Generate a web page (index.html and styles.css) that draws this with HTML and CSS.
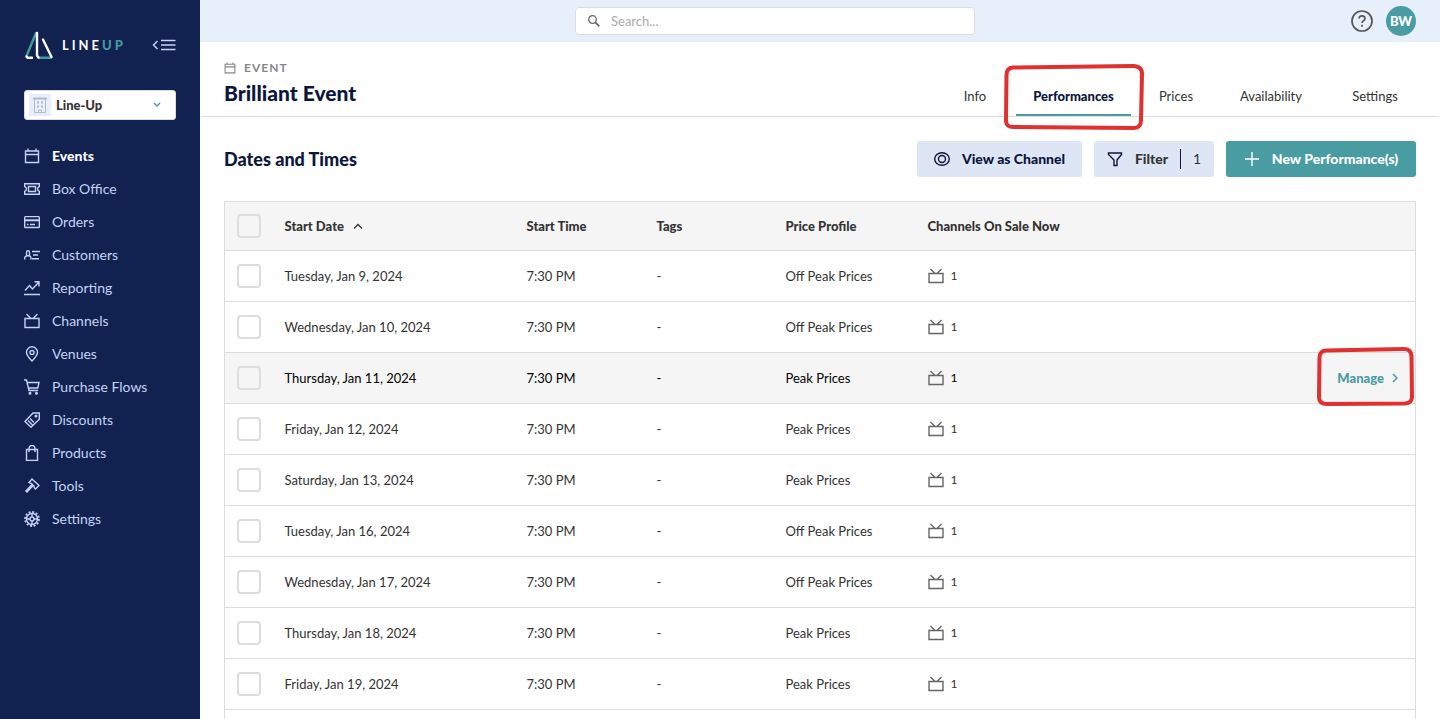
FILE: index.html
```html
<!DOCTYPE html>
<html lang="en">
<head>
  <meta charset="UTF-8">
  <meta name="viewport" content="width=device-width, initial-scale=1">
  <title>Brilliant Event</title>
  <link rel="stylesheet" href="styles.css">
</head>
<body>
  <!-- shared icons -->
  <svg class="sprite" aria-hidden="true">
    <symbol id="calendar" viewBox="0 0 16 16"><path d="M1.500 3h13v11.500h-13zM1.500 6.500h13M4 .5V3M12 .5V3"/></symbol>
    <symbol id="tv" viewBox="0 0 16 16"><path d="M1 5.500h14v9H1zM2.500 1l4.500 4.500M13.500 1L9 5.500"/></symbol>
  </svg>

  <div class="app">
    <aside class="sidebar">
      <div class="brand">
        <a class="logo" href="#" aria-label="Lineup">
          <svg width="30" height="29" viewBox="0 0 30 29" stroke-width="2.4" stroke-linecap="round" stroke-linejoin="round">
            <path d="M12 2L2.500 25M14.500 26.800h12.500" stroke="#459a9c"/>
            <path d="M2.500 25.500l1 1.300H8M13 2v22.500l1.500 2M19 8.500l8.500 17.500" stroke="#fff"/>
          </svg>
          <span class="logo-text">LINE<b>UP</b></span>
        </a>
        <button class="collapse" aria-label="Collapse menu">
          <svg width="24" height="14" viewBox="0 0 24 14"><path d="M5.500 3L1.500 7l4 4M9 2.500h14.500M9 7h14.500M9 11.500h14.500"/></svg>
        </button>
      </div>

      <div class="account">
        <span class="account-icon">
          <svg width="16" height="16" viewBox="0 0 16 16">
            <path d="M1 1.500h14" stroke-width="2"/>
            <path d="M2.500 2v13.500h11V2M6.500 15.500v-2.500h3v2.500"/>
            <path d="M5 5.500h2M9 5.500h2M5 9.500h2M9 9.500h2" stroke-width="2"/>
          </svg>
        </span>
        <select aria-label="Account"><option>Line-Up</option></select>
        <svg class="account-arrow" width="8" height="6" viewBox="0 0 8 6"><path d="M1 1l3 3 3-3"/></svg>
      </div>

      <nav class="menu">
        <a class="active" href="#"><svg><use href="#calendar"/></svg>Events</a>
        <a href="#"><svg viewBox="0 0 16 16"><path d="M.7 2.700h14.600v3a2.400 2.400 0 0 0 0 4.600v3H.7v-3a2.400 2.400 0 0 0 0-4.600zM4.500 5.500h7v5h-7z"/></svg>Box Office</a>
        <a href="#"><svg viewBox="0 0 16 16"><path d="M1.500 2.600h13a.8.8 0 0 1 .8.800v9.300a.8.8 0 0 1-.8.800h-13a.8.800 0 0 1-.8-.8V3.400a.8.8 0 0 1 .8-.8zM3 10.500h1.500M6 10.500h5"/><path d="M.7 6.300h14.600" stroke-width="2"/></svg>Orders</a>
        <a href="#"><svg viewBox="0 0 16 16"><path d="M.7 12.500V11c0-1.200.7-1.700 1.800-2V5.500c0-2.300 3-2.300 3 0V9c1 .3 1.500.8 1.500 2v1.500M2.500 8.800h3M8 4.500h8M9 8h5M8 11.800h7"/></svg>Customers</a>
        <a href="#"><svg viewBox="0 0 16 16"><path d="M0 14.500h16M1 10.500l4.500-5L8.500 9 15 2M10.500 1.800H15v4.700"/></svg>Reporting</a>
        <a href="#"><svg><use href="#tv"/></svg>Channels</a>
        <a href="#"><svg viewBox="0 0 16 16"><path d="M8 15C4.500 11.500 2.500 9 2.500 6.300a5.500 5.500 0 0 1 11 0C13.500 9 11.500 11.500 8 15z"/><circle cx="8" cy="6.500" r="2"/></svg>Venues</a>
        <a href="#"><svg viewBox="0 0 16 16"><path d="M0 1h2.500l2.500 10.500h9M3 3.500h12l-1.200 5.500H4.500"/><circle cx="6" cy="14.300" r=".8"/><circle cx="12.500" cy="14.300" r=".8"/></svg>Purchase Flows</a>
        <a href="#"><svg viewBox="0 0 16 16"><path d="M1 9.500L9 1h6.300v6.300L7 15.200zM4 8.500l4.500 4.500M6 6.500l4 4"/><circle cx="12" cy="4" r=".8"/></svg>Discounts</a>
        <a href="#"><svg viewBox="0 0 16 16"><path d="M2.500 4.500h11v11h-11zM5 7V3.500c0-4 6-4 6 0V7"/></svg>Products</a>
        <a href="#"><svg viewBox="0 0 16 16"><path d="M5 4.500L8 1l1.500 1.500 4 3.500 1.500 1.500-3.500 3.500-1.500-1.500V8L7.500 5.500z"/><path d="M8.500 7L2 14" stroke-width="2.800"/></svg>Tools</a>
        <a href="#"><svg viewBox="0 0 16 16"><circle cx="8" cy="8" r="7" stroke-width="1.800" stroke-dasharray="2 1.665"/><circle cx="8" cy="8" r="5.500"/><circle cx="8" cy="8" r="2"/><path d="M8 2.500V6M8 10v3.500M2.500 8H6M10 8h3.500"/></svg>Settings</a>
      </nav>
    </aside>

    <main class="main">
      <div class="topbar">
        <label class="search">
          <svg width="14" height="14" viewBox="0 0 14 14"><circle cx="5.500" cy="5.500" r="3.800" stroke-width="1.300"/><path d="M8.300 8.300l4 4" stroke-width="1.800"/></svg>
          <input type="text" placeholder="Search..." aria-label="Search">
        </label>
        <div class="user">
          <button class="help" aria-label="Help">
            <svg width="22" height="22" viewBox="0 0 22 22"><circle cx="11" cy="11" r="10"/><path d="M8 8.500c0-3.600 6-3.600 6 0 0 2-3 2.200-3 4.500M11 14.800v2"/></svg>
          </button>
          <button class="avatar">BW</button>
        </div>
      </div>

      <header class="event-header">
        <div>
          <div class="kicker"><svg width="12" height="12"><use href="#calendar"/></svg>EVENT</div>
          <h1>Brilliant Event</h1>
        </div>
        <nav class="tabs">
          <a href="#">Info</a>
          <a class="current" href="#">Performances
            <svg class="mark mark-tab" viewBox="0 0 142 68"><path d="M10 4.500L130 3q9 0 9 8l-1 46q0 8-7 8L12 64q-9 1-9-7L3.500 12q0-7 6.500-7.500z"/></svg>
          </a>
          <a href="#">Prices</a>
          <a href="#">Availability</a>
          <a href="#">Settings</a>
        </nav>
      </header>

      <section class="content">
        <div class="toolbar">
          <h2>Dates and Times</h2>
          <button class="btn btn-view">
            <svg width="16" height="16" viewBox="0 0 16 16"><ellipse cx="8" cy="8" rx="7.300" ry="6.300"/><circle cx="8" cy="8" r="3.500"/></svg>
            View as Channel
          </button>
          <button class="btn btn-filter">
            <svg width="16" height="16" viewBox="0 0 16 16"><path d="M1.500 2h13v1.500L10 9v5.500H7V9L1.500 3.500z"/></svg>
            Filter <span class="count">1</span>
          </button>
          <button class="btn btn-primary">
            <svg width="16" height="16" viewBox="0 0 16 16"><path d="M8 1v14M1 8h14"/></svg>
            New Performance(s)
          </button>
        </div>

        <table class="dates">
          <colgroup>
            <col class="c-check"><col class="c-date"><col class="c-time"><col class="c-tags"><col class="c-price"><col>
          </colgroup>
          <thead>
            <tr>
              <th><input type="checkbox" aria-label="Select all"></th>
              <th>Start Date <svg class="sort" width="10" height="6" viewBox="0 0 10 6"><path d="M1 5.500l4-4 4 4"/></svg></th>
              <th>Start Time</th>
              <th>Tags</th>
              <th>Price Profile</th>
              <th>Channels On Sale Now</th>
            </tr>
          </thead>
          <tbody>
            <tr>
              <td><input type="checkbox" aria-label="Select Jan 9"></td>
              <td>Tuesday, Jan 9, 2024</td><td>7:30 PM</td><td>-</td><td>Off Peak Prices</td>
              <td><div class="channels"><svg><use href="#tv"/></svg>1</div></td>
            </tr>
            <tr>
              <td><input type="checkbox" aria-label="Select Jan 10"></td>
              <td>Wednesday, Jan 10, 2024</td><td>7:30 PM</td><td>-</td><td>Off Peak Prices</td>
              <td><div class="channels"><svg><use href="#tv"/></svg>1</div></td>
            </tr>
            <tr class="hover">
              <td><input type="checkbox" aria-label="Select Jan 11"></td>
              <td>Thursday, Jan 11, 2024</td><td>7:30 PM</td><td>-</td><td>Peak Prices</td>
              <td>
                <div class="channels"><svg><use href="#tv"/></svg>1
                  <a class="manage" href="#">Manage
                    <svg class="arrow" width="6" height="10" viewBox="0 0 6 10"><path d="M1 1l4 4-4 4"/></svg>
                    <svg class="mark mark-manage" viewBox="0 0 98 60"><path d="M10 4.500L88 3q7 0 7.500 7l.5 41q0 6-7 6.500L11 58q-8 0-8-7l.5-39q0-7 6.500-7.500z"/></svg>
                  </a>
                </div>
              </td>
            </tr>
            <tr>
              <td><input type="checkbox" aria-label="Select Jan 12"></td>
              <td>Friday, Jan 12, 2024</td><td>7:30 PM</td><td>-</td><td>Peak Prices</td>
              <td><div class="channels"><svg><use href="#tv"/></svg>1</div></td>
            </tr>
            <tr>
              <td><input type="checkbox" aria-label="Select Jan 13"></td>
              <td>Saturday, Jan 13, 2024</td><td>7:30 PM</td><td>-</td><td>Peak Prices</td>
              <td><div class="channels"><svg><use href="#tv"/></svg>1</div></td>
            </tr>
            <tr>
              <td><input type="checkbox" aria-label="Select Jan 16"></td>
              <td>Tuesday, Jan 16, 2024</td><td>7:30 PM</td><td>-</td><td>Off Peak Prices</td>
              <td><div class="channels"><svg><use href="#tv"/></svg>1</div></td>
            </tr>
            <tr>
              <td><input type="checkbox" aria-label="Select Jan 17"></td>
              <td>Wednesday, Jan 17, 2024</td><td>7:30 PM</td><td>-</td><td>Off Peak Prices</td>
              <td><div class="channels"><svg><use href="#tv"/></svg>1</div></td>
            </tr>
            <tr>
              <td><input type="checkbox" aria-label="Select Jan 18"></td>
              <td>Thursday, Jan 18, 2024</td><td>7:30 PM</td><td>-</td><td>Peak Prices</td>
              <td><div class="channels"><svg><use href="#tv"/></svg>1</div></td>
            </tr>
            <tr>
              <td><input type="checkbox" aria-label="Select Jan 19"></td>
              <td>Friday, Jan 19, 2024</td><td>7:30 PM</td><td>-</td><td>Peak Prices</td>
              <td><div class="channels"><svg><use href="#tv"/></svg>1</div></td>
            </tr>
            <tr><td colspan="6"></td></tr>
          </tbody>
        </table>
      </section>
    </main>
  </div>
</body>
</html>
```
FILE: styles.css
```css
* {
  box-sizing: border-box;
}
body {
  margin: 0;
  font-family: Lato, "Liberation Sans", sans-serif;
  font-size: 13px;
  color: #333;
  background: #fff;
}
a {
  color: inherit;
  text-decoration: none;
}
button {
  font: inherit;
  border: none;
  padding: 0;
  background: none;
  cursor: pointer;
}
svg {
  fill: none;
  stroke: currentColor;
  flex-shrink: 0;
}
.sprite {
  display: none;
}
.app {
  display: flex;
  height: 100vh;
  overflow: hidden;
}

/* sidebar */
.sidebar {
  width: 200px;
  flex-shrink: 0;
  padding: 30px 24px;
  background: #112150;
  color: #c5d3f5;
}
.brand {
  display: flex;
  align-items: center;
  justify-content: space-between;
  height: 30px;
}
.logo {
  display: flex;
  align-items: center;
  gap: 8px;
}
.logo-text {
  color: #fff;
  font-size: 13px;
  font-weight: 700;
  letter-spacing: 3px;
}
.logo-text b {
  color: #459a9c;
}
.collapse {
  display: flex;
  color: #c5d3f5;
}
.collapse svg {
  stroke-width: 1.5;
}
.account {
  position: relative;
  display: flex;
  align-items: center;
  height: 30px;
  margin: 30px 0 19px;
  padding: 0 4px;
  background: #fff;
  border: 1px solid #ddd;
  border-radius: 3px;
}
.account-icon {
  display: flex;
  align-items: center;
  justify-content: center;
  width: 22px;
  height: 22px;
  background: #e7f0fa;
  color: #b0bccb;
}
.account select {
  flex: 1;
  appearance: none;
  border: none;
  background: none;
  padding: 0 5px;
  font: 900 13px Lato, sans-serif;
  color: #333;
}
.account-arrow {
  margin-right: 10px;
  color: #459a9c;
  stroke-width: 1.4;
}
.menu a {
  display: flex;
  align-items: center;
  gap: 12px;
  height: 33px;
  font-size: 14px;
}
.menu svg {
  width: 16px;
  height: 16px;
  stroke-width: 1.4;
}
.menu .active {
  color: #fff;
  font-weight: 900;
}
.menu .active svg {
  color: #c5d3f5;
}

/* top bar */
.main {
  flex: 1;
  min-width: 0;
}
/* search sits a little left of the middle of the bar */
.topbar {
  display: grid;
  grid-template-columns: calc(50% - 245px) 400px 1fr;
  align-items: center;
  height: 42px;
  padding: 0 24px;
  background: #e7f0fa;
}
.search {
  grid-column: 2;
  display: flex;
  align-items: center;
  gap: 10px;
  height: 28px;
  padding: 0 11px;
  background: #fff;
  border: 1px solid #ddd;
  border-radius: 4px;
  color: #666;
}
.search input {
  flex: 1;
  border: none;
  outline: none;
  padding: 0;
  font: 13px Lato, sans-serif;
}
.search input::placeholder {
  color: #aaa;
}
.user {
  display: flex;
  align-items: center;
  justify-content: flex-end;
  gap: 13px;
}
.help {
  display: flex;
  color: #555;
}
.help svg {
  stroke-width: 1.7;
}
.avatar {
  width: 30px;
  height: 30px;
  border-radius: 50%;
  background: #499ca1;
  color: #fff;
  font-weight: 900;
}

/* event header */
.event-header {
  display: flex;
  justify-content: space-between;
  height: 75px;
  margin: 0 2px;
  padding: 0 9px 0 22px;
  border-bottom: 1px solid #ddd;
}
.kicker {
  display: flex;
  align-items: center;
  gap: 8px;
  margin-top: 18px;
  font-size: 12px;
  line-height: 16px;
  font-weight: 700;
  letter-spacing: 1px;
  color: #888;
}
.kicker svg {
  stroke-width: 1.5;
}
h1 {
  margin: 4px 0 0;
  font-size: 21px;
  line-height: 26px;
  font-weight: 900;
  color: #0c163d;
}
.tabs {
  display: grid;
  grid-template-columns: 82px 115px 90px 100px 108px;
  align-self: end;
  height: 40px;
  line-height: 40px;
  text-align: center;
}
.tabs .current {
  position: relative;
  box-shadow: inset 0 -2px #499ca1;
  color: #0c163d;
  font-weight: 900;
}

/* hand drawn highlights */
.mark {
  position: absolute;
  stroke: #e03030;
  stroke-width: 4;
  stroke-linejoin: round;
  pointer-events: none;
}
.mark-tab {
  left: -13px;
  top: -13px;
  width: 142px;
  height: 68px;
}
.mark-manage {
  right: -16px;
  top: -24px;
  width: 98px;
  height: 60px;
}

/* content */
.content {
  padding: 24px;
}
.toolbar {
  display: flex;
  gap: 12px;
  margin-bottom: 24px;
}
h2 {
  flex: 1;
  margin: 0;
  font-size: 18px;
  line-height: 36px;
  font-weight: 900;
  color: #0c163d;
}
.btn {
  display: flex;
  align-items: center;
  justify-content: center;
  gap: 12px;
  height: 36px;
  border-radius: 3px;
  background: #dee6f5;
  color: #0c163d;
  font-size: 14px;
  line-height: 16px;
  font-weight: 900;
}
.btn svg {
  stroke-width: 1.4;
}
.btn-view {
  min-width: 165px;
}
.btn-filter {
  min-width: 120px;
  color: #333;
}
.btn-filter svg {
  color: #0c163d;
}
.count {
  padding-left: 12px;
  border-left: 1px solid #0c163d;
  line-height: 20px;
  font-weight: 400;
}
.btn-primary {
  min-width: 190px;
  background: #499ca1;
  color: #fff;
}

/* table */
.dates {
  width: 100%;
  table-layout: fixed;
  border-collapse: collapse;
  border: 1px solid #ddd;
}
.c-check { width: 48px; }
.c-date { width: 242px; }
.c-time { width: 130px; }
.c-tags { width: 129px; }
.c-price { width: 142px; }
.dates th,
.dates td {
  height: 51px;
  padding: 0 12px;
  border-bottom: 1px solid #ddd;
  text-align: left;
}
.dates th {
  height: 49px;
  background: #f5f5f5;
  font-weight: 900;
}
.dates input {
  display: block;
  appearance: none;
  width: 24px;
  height: 24px;
  margin: 0;
  border: 2px solid #ddd;
  border-radius: 4px;
}
.sort {
  margin-left: 6px;
  vertical-align: 2px;
  stroke-width: 1.3;
}
.channels {
  display: flex;
  align-items: center;
  gap: 7px;
  font-size: 12px;
  line-height: 16px;
}
.channels > svg {
  width: 16px;
  height: 16px;
  color: #666;
  stroke-width: 1.4;
}
.hover {
  background: #f5f5f5;
  color: #000;
}
.manage {
  position: relative;
  display: flex;
  align-items: center;
  gap: 8px;
  margin-left: auto;
  margin-right: 5px;
  color: #499ca1;
  font-size: 13px;
  font-weight: 900;
}
.arrow {
  stroke-width: 1.5;
}
```
